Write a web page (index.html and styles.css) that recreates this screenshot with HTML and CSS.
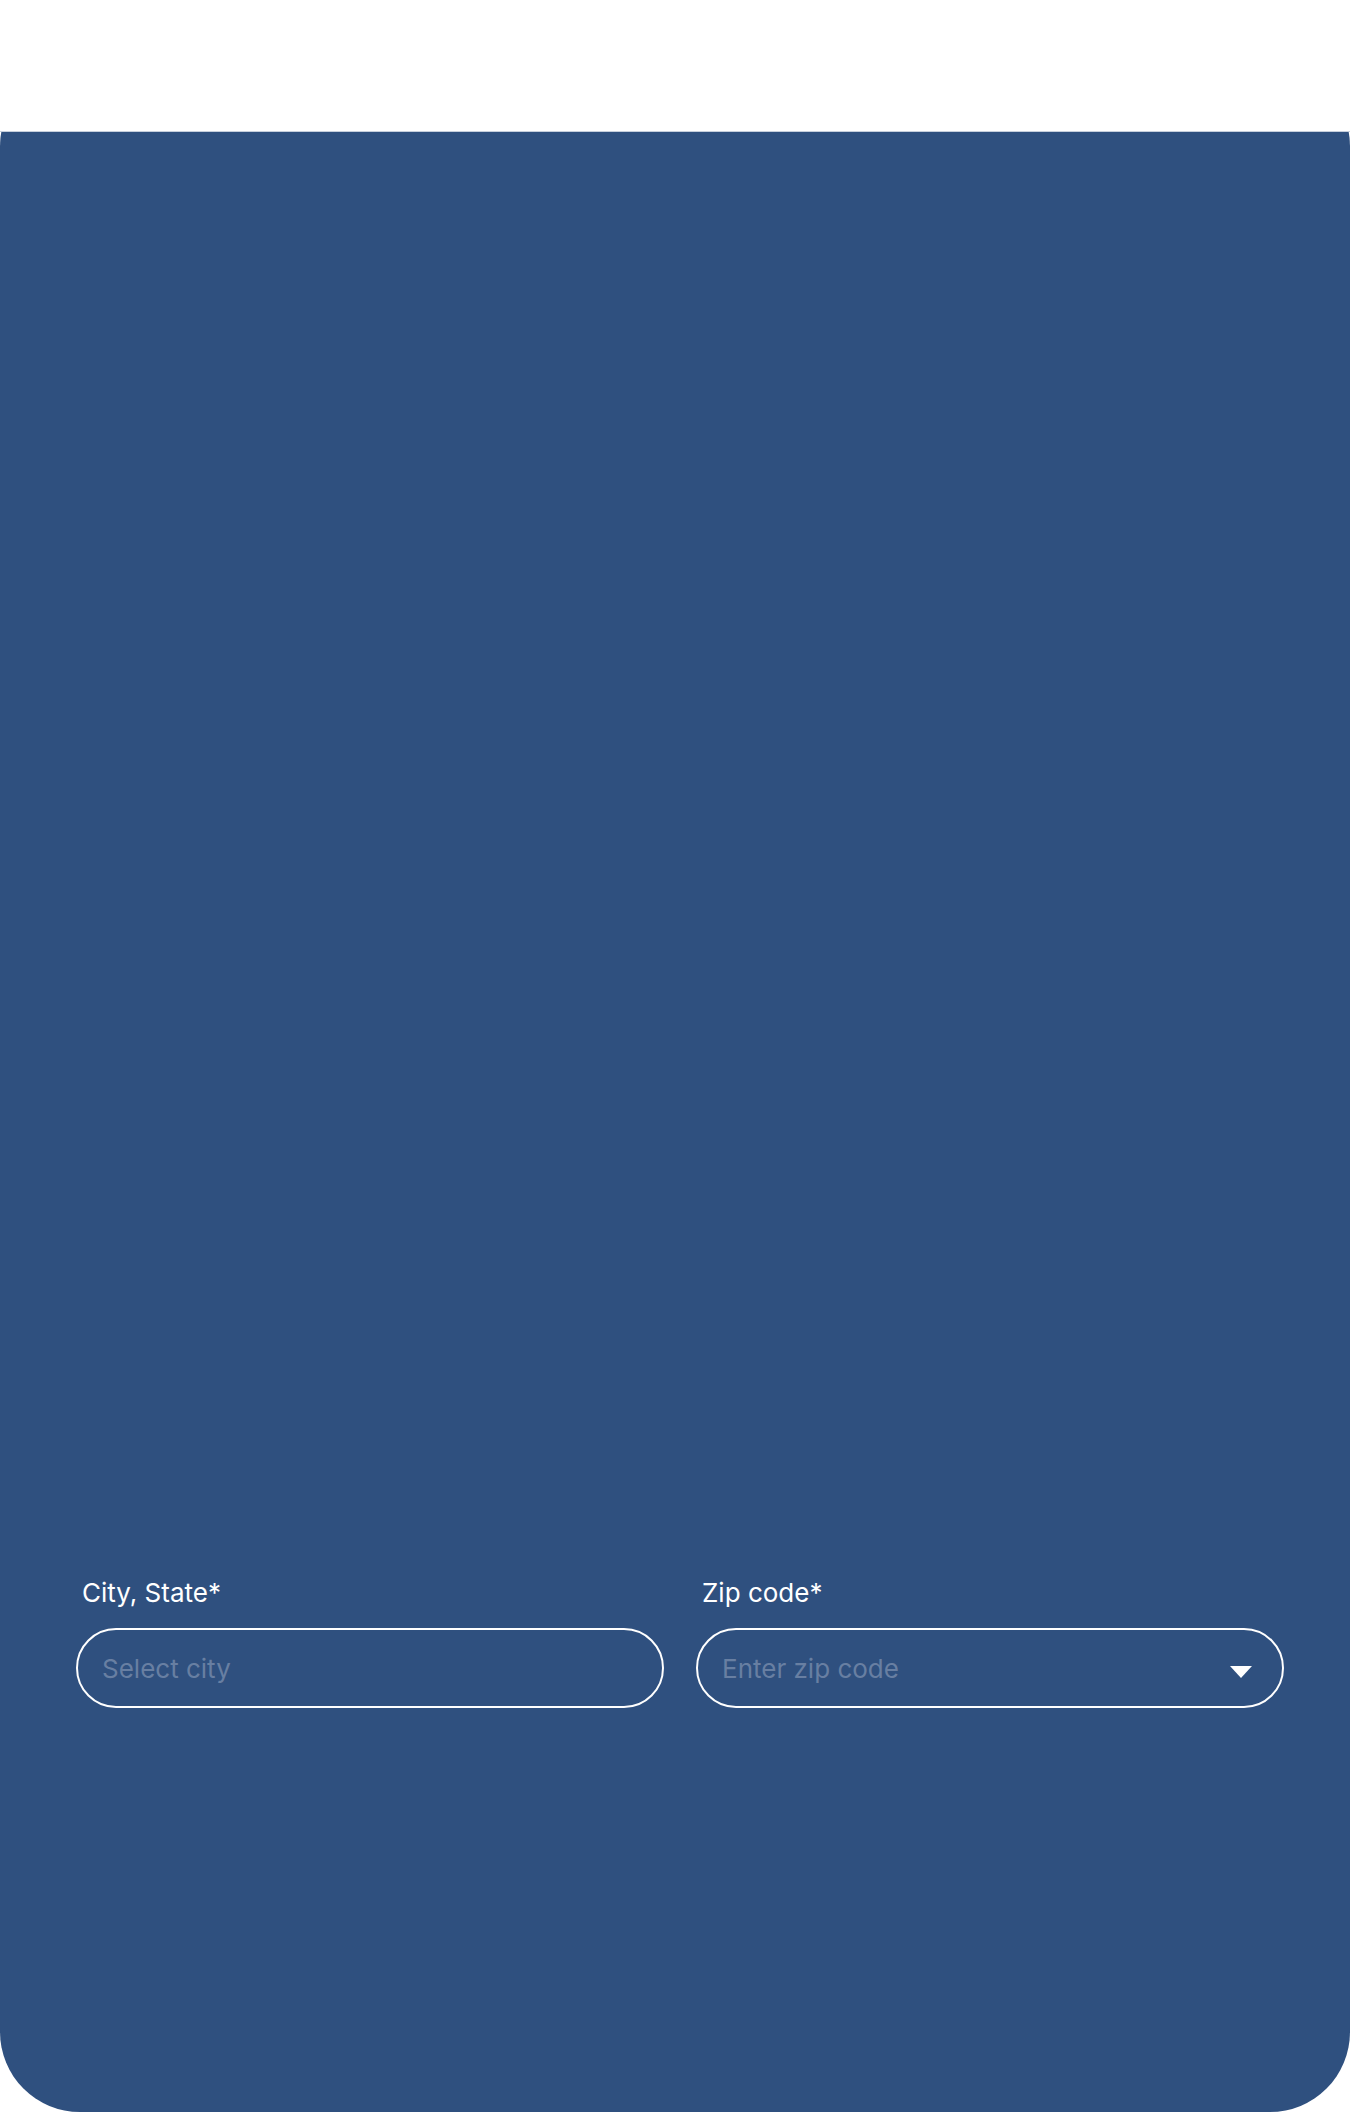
FILE: index.html
```html
<!DOCTYPE html>
<html lang="en">
<head>
<meta charset="utf-8">
<meta name="viewport" content="width=device-width, initial-scale=1">
<title>Location</title>
<link rel="stylesheet" href="styles.css">
</head>
<body>
<header class="page-header"></header>
<main class="panel">
  <form class="form-row">
    <div class="field">
      <label class="field-label" for="city">City, State*</label>
      <input class="control" id="city" type="text" placeholder="Select city">
    </div>
    <div class="field">
      <label class="field-label" for="zip">Zip code*</label>
      <div class="select-wrap">
        <select class="control control-select" id="zip" required>
          <option value="">Enter zip code</option>
        </select>
        <svg class="caret" viewBox="0 0 22 12" aria-hidden="true"><path d="M0 0H22L11 12Z"/></svg>
      </div>
    </div>
  </form>
</main>
</body>
</html>
```

FILE: styles.css
```css
* {
  box-sizing: border-box;
}

body {
  margin: 0;
  background: #fff;
  font-family: Inter, "Liberation Sans", sans-serif;
  font-size: 26px;
  font-weight: 400;
  line-height: 32px;
}

.page-header {
  position: relative;
  z-index: 1;
  height: 132px;
  background: #fff;
  border-bottom: 1px solid #c6cfdc;
}

.panel {
  margin-top: -66px;
  padding: 1511px 66px 404px 76px;
  background: #2f507f;
  border-radius: 80px;
}

.form-row {
  display: grid;
  grid-template-columns: 1fr 1fr;
  gap: 32px;
}

.field {
  display: flex;
  flex-direction: column;
  gap: 19px;
}

.field-label {
  padding-left: 6px;
  color: #fff;
}

.control {
  display: block;
  width: 100%;
  height: 80px;
  padding: 0 24px;
  border: 2px solid #fff;
  border-radius: 40px;
  background: transparent;
  color: #fff;
  font: inherit;
  appearance: none;
}

.control::placeholder {
  color: #687fa2;
  opacity: 1;
}

.control-select {
  padding-top: 2px;
}

.control-select:invalid {
  color: #687fa2;
}

.select-wrap {
  position: relative;
}

.caret {
  position: absolute;
  top: 38px;
  right: 32px;
  width: 22px;
  height: 12px;
  fill: #fff;
  pointer-events: none;
}
```
